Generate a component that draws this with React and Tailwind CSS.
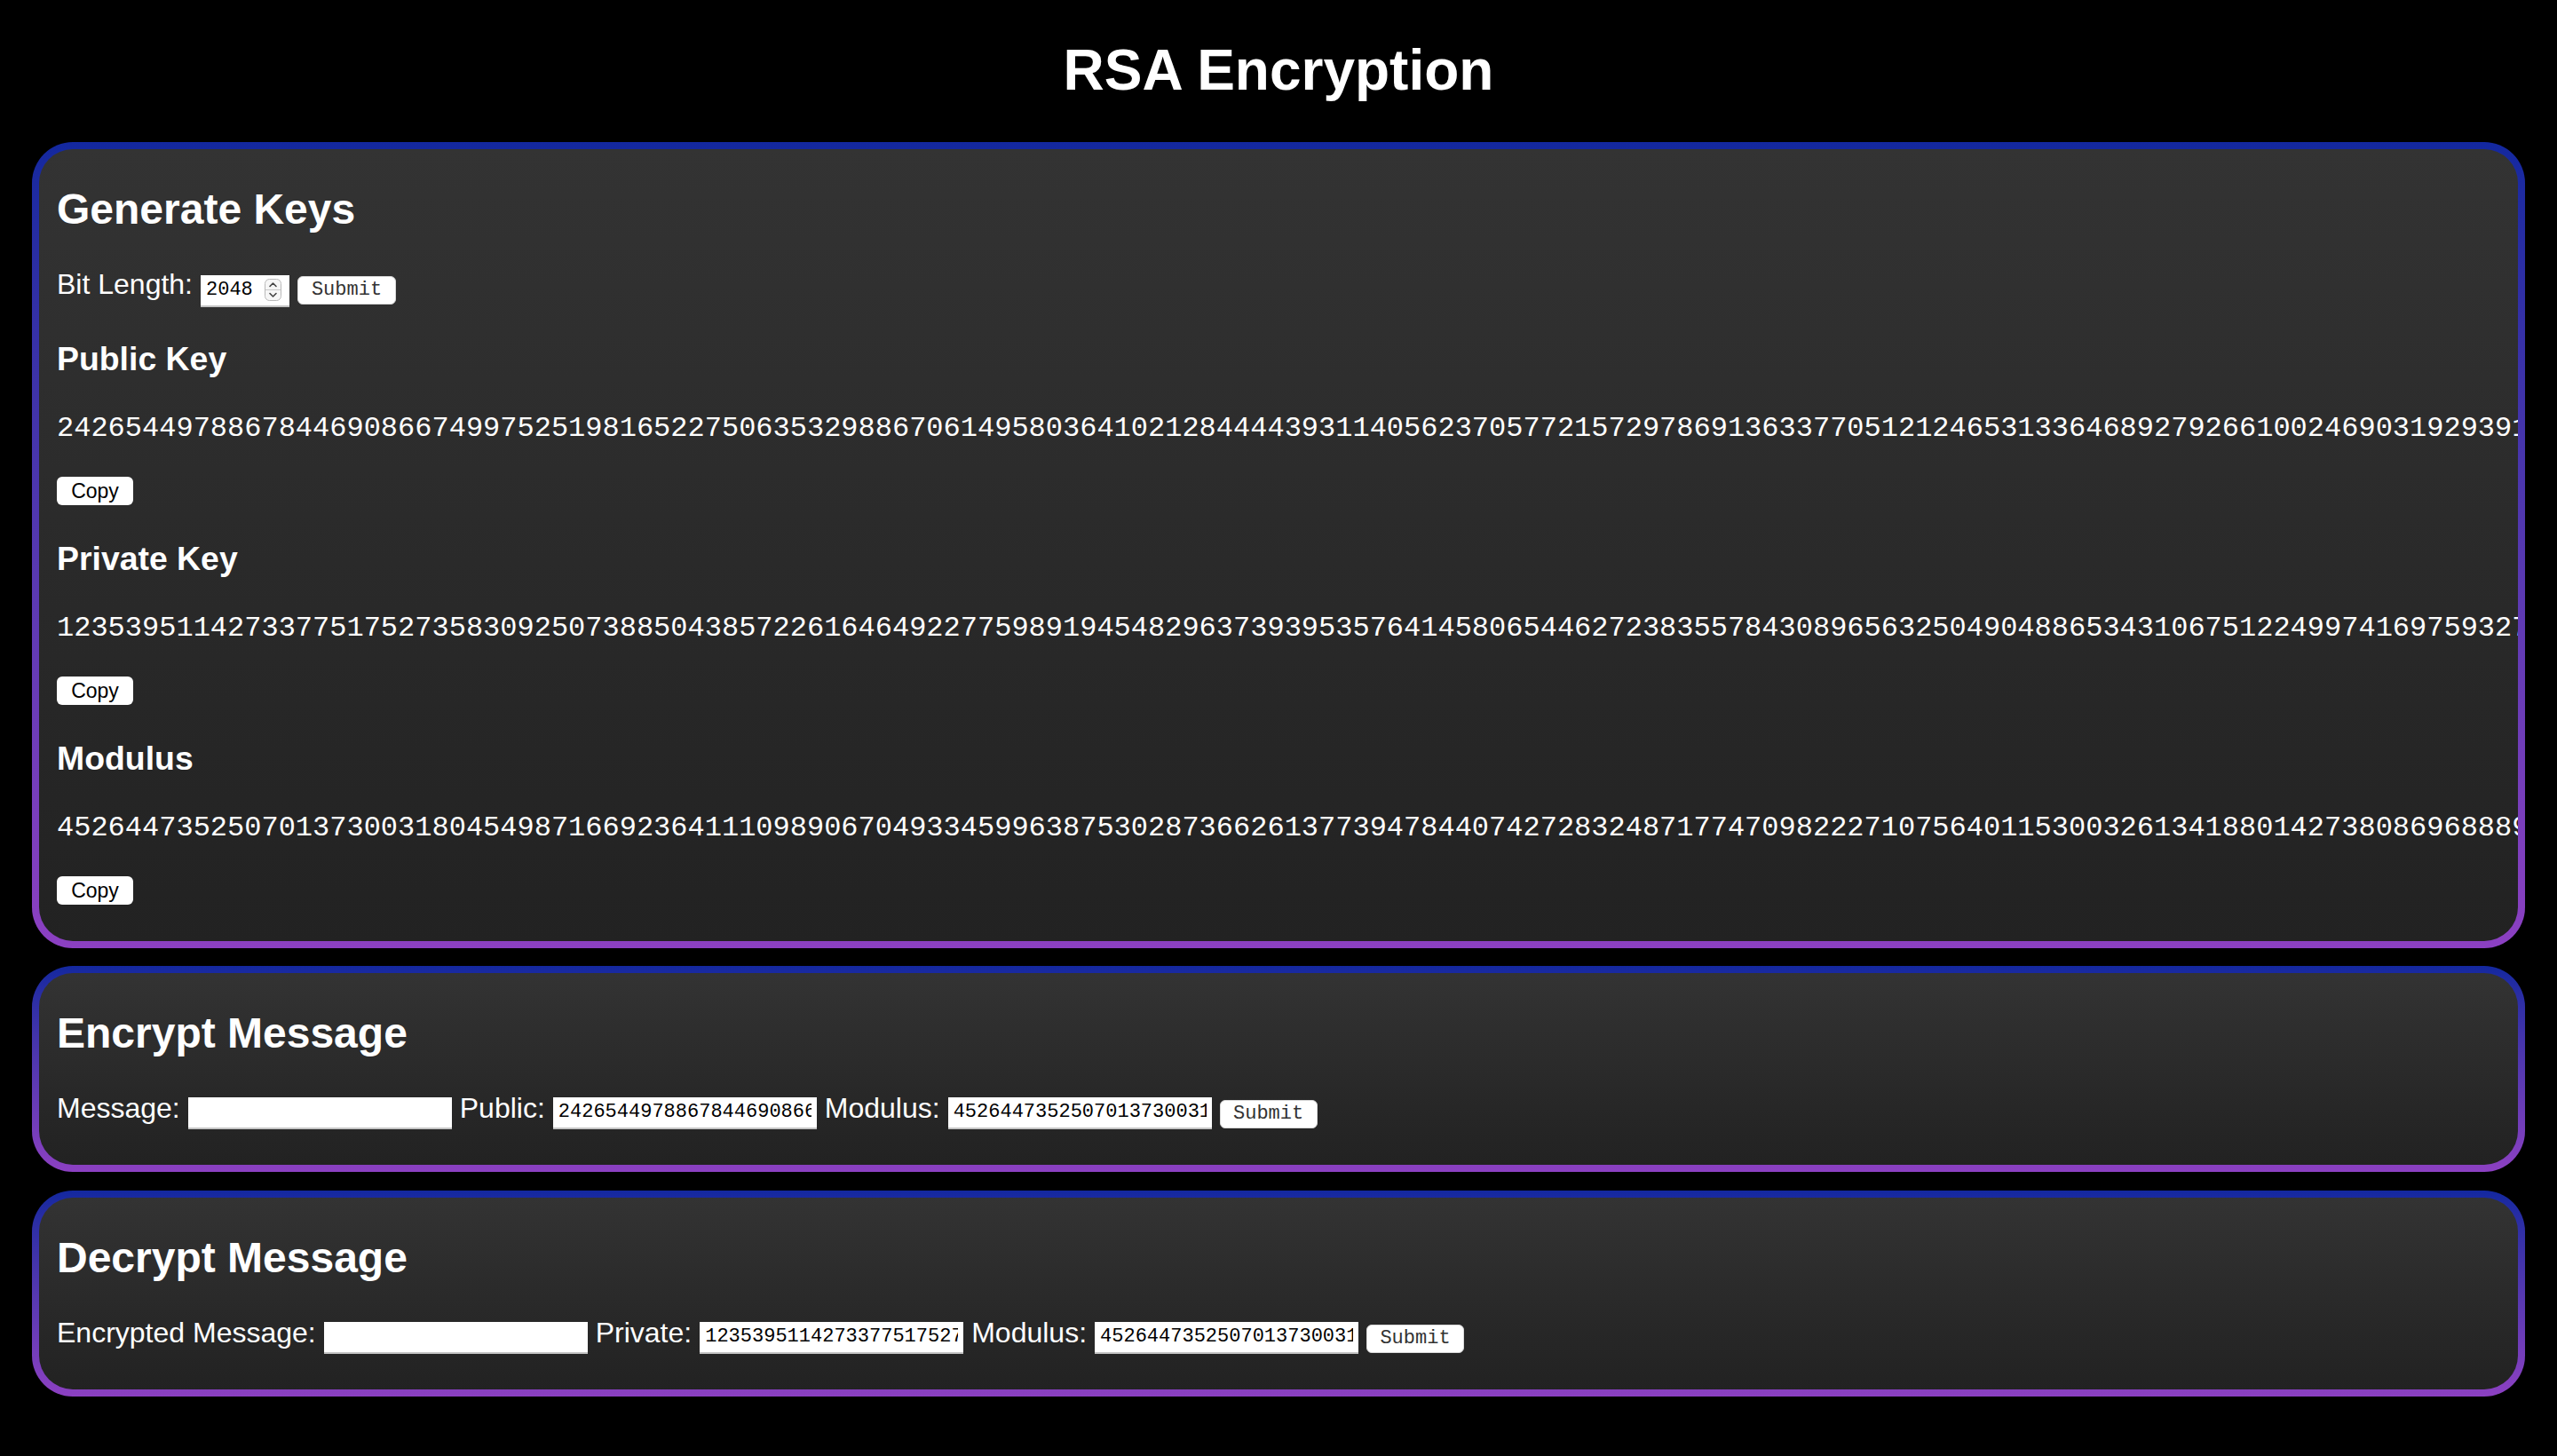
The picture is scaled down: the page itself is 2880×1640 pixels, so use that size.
import React from "react";

const PUBLIC_KEY =
  "24265449788678446908667499752519816522750635329886706149580364102128444439311405623705772157297869136337705121246531336468927926610024690319293916382745510928374650192";
const PRIVATE_KEY =
  "12353951142733775175273583092507388504385722616464922775989194548296373939535764145806544627238355784308965632504904886534310675122499741697593274018562738491027";
const MODULUS =
  "45264473525070137300318045498716692364111098906704933459963875302873662613773947844074272832487177470982227107564011530032613418801427380869688895173620485917263";

const mono = "font-['Liberation_Mono','Courier_New',monospace]";

const Card = ({ children, bottom, className = "" }) => (
  <div className={`rounded-[46px] bg-linear-to-b from-[#13289f] to-[#8c40c2] p-[8px] ${className}`}>
    <div className={`overflow-hidden rounded-[38px] bg-linear-to-b from-[#333333] to-[#222222] px-[20px] ${bottom}`}>
      {children}
    </div>
  </div>
);

const Title = ({ children }) => (
  <h2 className="mt-[40px] text-[48px] font-bold leading-[56px] whitespace-nowrap">{children}</h2>
);

const Label = ({ children }) => (
  <span className="text-[32px] leading-[37px] whitespace-nowrap">{children}</span>
);

const TextInput = ({ value = "" }) => (
  <input
    type="text"
    readOnly
    value={value}
    className={`mt-[5.6px] h-[36px] w-[297px] shrink-0 border-0 border-b-[2px] border-[#c4c4c4] bg-white px-[6px] text-[22px] text-black outline-none ${mono}`}
  />
);

const SubmitButton = () => (
  <button
    className={`mt-[8.6px] h-[32px] w-[110px] shrink-0 rounded-[6px] border border-[#d9d9d9] bg-white text-[22px] leading-[30px] text-[#333333] ${mono}`}
  >
    Submit
  </button>
);

// little up/down arrows of the number field
const Spinner = () => (
  <svg width="19" height="25" viewBox="0 0 19 25" className="shrink-0">
    <rect x="0.5" y="0.5" width="18" height="24" rx="5" fill="#f6f6f6" stroke="#b9b9b9" />
    <line x1="1" y1="12.5" x2="18" y2="12.5" stroke="#c9c9c9" />
    <path d="M6 8.5 L9.5 5 L13 8.5" fill="none" stroke="#444" strokeWidth="1.6" strokeLinecap="round" strokeLinejoin="round" />
    <path d="M6 16.5 L9.5 20 L13 16.5" fill="none" stroke="#444" strokeWidth="1.6" strokeLinecap="round" strokeLinejoin="round" />
  </svg>
);

const KeyBlock = ({ title, value, first }) => (
  <div>
    <h3
      className={`text-[37.4px] font-bold leading-[43px] whitespace-nowrap ${first ? "mt-[37.5px]" : "mt-[39px]"}`}
    >
      {title}
    </h3>
    <p className={`mt-[39px] text-[32px] leading-[36px] whitespace-nowrap ${mono}`}>{value}</p>
    <button className="mt-[36px] block h-[32px] w-[86px] rounded-[6px] bg-white text-[23px] leading-[32px] text-black">
      Copy
    </button>
  </div>
);

export default function App() {
  return (
    <div className="min-h-screen bg-black px-[36px] pt-[42px] pb-[69px] font-['Liberation_Sans',Arial,sans-serif] text-white">
      <h1 className="mb-[44px] text-center text-[64px] font-bold leading-[74px]">RSA Encryption</h1>

      <Card bottom="pb-[40.5px]">
        <Title>Generate Keys</Title>
        <div className="mt-[38.4px] flex items-start gap-[9px]">
          <Label>Bit Length:</Label>
          <div className="mt-[7.6px] flex h-[36px] w-[100px] shrink-0 items-center justify-between border-b-[2px] border-[#c4c4c4] bg-white pr-[9px] pl-[6px]">
            <span className={`text-[22px] text-black ${mono}`}>2048</span>
            <Spinner />
          </div>
          <button
            className={`mt-[8.6px] h-[32px] w-[111px] shrink-0 rounded-[6px] border border-[#d9d9d9] bg-white text-[22px] leading-[30px] text-[#333333] ${mono}`}
          >
            Submit
          </button>
        </div>
        <KeyBlock title="Public Key" value={PUBLIC_KEY} first />
        <KeyBlock title="Private Key" value={PRIVATE_KEY} />
        <KeyBlock title="Modulus" value={MODULUS} />
      </Card>

      <Card className="mt-[20px]" bottom="pb-[40px]">
        <Title>Encrypt Message</Title>
        <div className="mt-[38.4px] flex items-start gap-[9px]">
          <Label>Message:</Label>
          <TextInput />
          <Label>Public:</Label>
          <TextInput value={PUBLIC_KEY} />
          <Label>Modulus:</Label>
          <TextInput value={MODULUS} />
          <SubmitButton />
        </div>
      </Card>

      <Card className="mt-[21px]" bottom="pb-[40px]">
        <Title>Decrypt Message</Title>
        <div className="mt-[38.4px] flex items-start gap-[9px]">
          <Label>Encrypted Message:</Label>
          <TextInput />
          <Label>Private:</Label>
          <TextInput value={PRIVATE_KEY} />
          <Label>Modulus:</Label>
          <TextInput value={MODULUS} />
          <SubmitButton />
        </div>
      </Card>
    </div>
  );
}
